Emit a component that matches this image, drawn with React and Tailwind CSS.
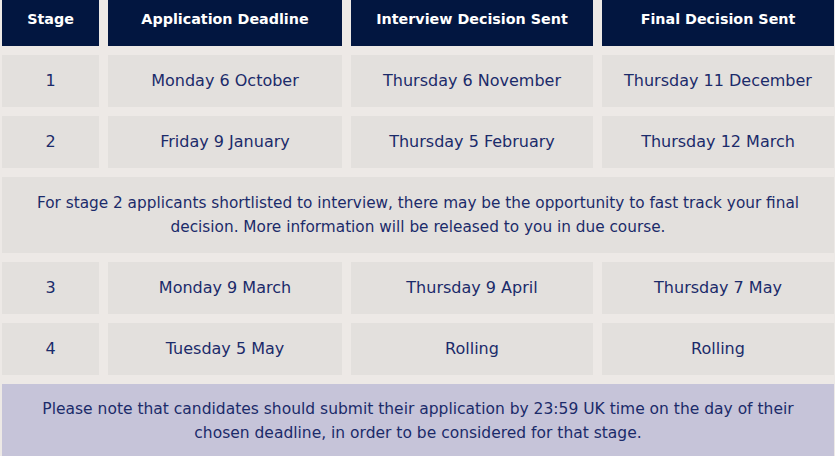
// App.jsx — stage deadlines table

const rows = [
  ['1', 'Monday 6 October', 'Thursday 6 November', 'Thursday 11 December'],
  ['2', 'Friday 9 January', 'Thursday 5 February', 'Thursday 12 March'],
  'note',
  ['3', 'Monday 9 March', 'Thursday 9 April', 'Thursday 7 May'],
  ['4', 'Tuesday 5 May', 'Rolling', 'Rolling'],
]

const headers = ['Stage', 'Application Deadline', 'Interview Decision Sent', 'Final Decision Sent']

export default function App() {
  return (
    <div
      className="min-h-screen bg-[#ede9e6] pl-[2px] text-[#1b2b6a]"
      style={{ fontFamily: '"DejaVu Sans", "Open Sans", sans-serif' }}
    >
      <div className="grid grid-cols-[97px_234px_242px_232px] gap-[9px]">
        {headers.map(h => (
          <div key={h} className="h-[46px] pb-[6px] bg-[#021640] flex items-center justify-center text-white font-bold text-[14.3px]">
            {h}
          </div>
        ))}

        {rows.map((row, i) =>
          row === 'note' ? (
            <div key={i} className="col-span-4 h-[76px] bg-[#e3e0dd] flex items-center justify-center text-center text-[15.3px] leading-[24px] px-4">
              For stage 2 applicants shortlisted to interview, there may be the opportunity to fast track your final decision. More information will be released to you in due course.
            </div>
          ) : (
            row.map((cell, j) => (
              <div key={`${i}-${j}`} className="h-[52px] bg-[#e3e0dd] flex items-center justify-center text-[16px]">
                {cell}
              </div>
            ))
          )
        )}

        <div className="col-span-4 h-[80px] bg-[#c6c4d9] flex items-start justify-center text-center text-[15.5px] leading-[24px] pt-[13px] px-6">
          Please note that candidates should submit their application by 23:59 UK time on the day of their chosen deadline, in order to be considered for that stage.
        </div>
      </div>
    </div>
  )
}
